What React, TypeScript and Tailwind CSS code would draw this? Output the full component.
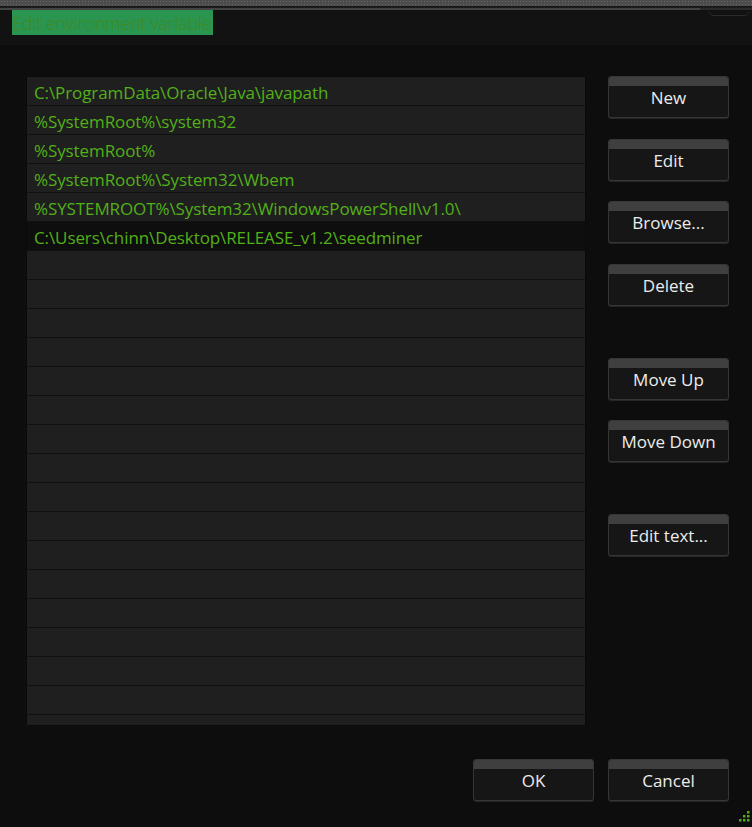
import React from 'react';

const paths = [
  'C:\\ProgramData\\Oracle\\Java\\javapath',
  '%SystemRoot%\\system32',
  '%SystemRoot%',
  '%SystemRoot%\\System32\\Wbem',
  '%SYSTEMROOT%\\System32\\WindowsPowerShell\\v1.0\\',
  'C:\\Users\\chinn\\Desktop\\RELEASE_v1.2\\seedminer',
];

const SELECTED = 5;
const ROW_COUNT = 23;

function DlgButton({ label }: { label: string }) {
  return (
    <button
      type="button"
      className="flex h-[42px] w-[121px] flex-col overflow-hidden rounded-[3px] border border-[#363636] bg-[#161616] shadow-[0_1px_0_#262626]"
    >
      <span className="h-[9px] w-full shrink-0 bg-[#3f3f3f]" />
      <span className="mt-[2px] block h-[20px] w-full whitespace-nowrap text-center text-[17px] leading-[20px] text-[#ececec]">
        {label}
      </span>
    </button>
  );
}

export default function App() {
  const rows = Array.from({ length: ROW_COUNT }, (_, i) => paths[i] ?? '');

  return (
    <div
      className="relative flex h-[827px] w-[752px] flex-col overflow-hidden bg-[#0d0d0d]"
      style={{ fontFamily: '"Open Sans", "Noto Sans", sans-serif' }}
    >
      {/* title strip */}
      <div className="h-[6px] w-full bg-[#4c4c4c] bg-[radial-gradient(#6a6a6a_0.6px,transparent_0.7px)] bg-[length:3px_3px]" />
      <div className="h-[2px] w-full bg-[#1a1a1a]" />
      <div className="flex h-[2px] w-full">
        <div className="h-full w-[700px] bg-[#444]" />
        <div className="h-full flex-1 bg-[#2a2a2a]" />
      </div>
      <div className="relative h-[35px] w-full bg-[#121212]">
        <svg className="absolute right-0 top-[-2px]" width="52" height="10" viewBox="0 0 52 10">
          <path d="M0 0.5 H52 M8 3.5 L12 7.5 H46 L50 3.5" stroke="#2a2a2a" strokeWidth="1" fill="none" />
        </svg>
        <div className="ml-[12px] flex h-[25px] w-[201px] items-center overflow-hidden bg-[#2a9550]">
          <span className="whitespace-nowrap text-[18px] font-light leading-none tracking-[-0.3px] text-[#3f8a22]">
            Edit environment variable
          </span>
        </div>
      </div>

      {/* body */}
      <div className="mt-[31px] flex">
        <div className="ml-[26px] h-[650px] w-[560px] overflow-hidden border border-[#0a0a0a] bg-[#1f1f1f]">
          {rows.map((p, i) => (
            <div
              key={i}
              className={`flex h-[29px] items-center border-b border-[#111] pl-[7px] pt-[4px] ${
                i === SELECTED ? 'bg-[#0e0e0e]' : ''
              }`}
            >
              <span className="whitespace-nowrap text-[17px] leading-[20px] tracking-[-0.1px] text-[#52b018]">{p}</span>
            </div>
          ))}
        </div>

        <div className="ml-[22px] flex flex-col">
          <DlgButton label="New" />
          <div className="h-[21px]" />
          <DlgButton label="Edit" />
          <div className="h-[20px]" />
          <DlgButton label="Browse..." />
          <div className="h-[21px]" />
          <DlgButton label="Delete" />
          <div className="h-[52px]" />
          <DlgButton label="Move Up" />
          <div className="h-[20px]" />
          <DlgButton label="Move Down" />
          <div className="h-[52px]" />
          <DlgButton label="Edit text..." />
        </div>
      </div>

      {/* footer */}
      <div className="mt-[33px] flex justify-end gap-[14px] pr-[23px]">
        <DlgButton label="OK" />
        <DlgButton label="Cancel" />
      </div>

      <svg className="absolute bottom-[4px] right-[2px]" width="12" height="12" viewBox="0 0 12 12">
        <rect x="9" y="0" width="2.5" height="2.5" fill="#4caf1a" />
        <rect x="5" y="4" width="2.5" height="2.5" fill="#4caf1a" />
        <rect x="9" y="4" width="2.5" height="2.5" fill="#4caf1a" />
        <rect x="1" y="8" width="2.5" height="2.5" fill="#4caf1a" />
        <rect x="5" y="8" width="2.5" height="2.5" fill="#4caf1a" />
        <rect x="9" y="8" width="2.5" height="2.5" fill="#4caf1a" />
      </svg>
    </div>
  );
}
